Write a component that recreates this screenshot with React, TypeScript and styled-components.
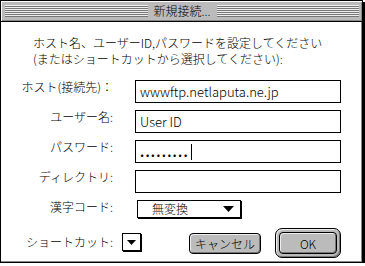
import styled, { createGlobalStyle } from 'styled-components';

const GlobalStyle = createGlobalStyle`
  body {
    margin: 0;
    background: #fff;
  }
  * {
    box-sizing: border-box;
  }
`;

const font = `"Noto Sans CJK JP", "DejaVu Sans", sans-serif`;

const DownArrow: React.FC<{ w?: number }> = ({ w = 11 }) => (
  <svg width={w} height={Math.ceil(w / 2)} viewBox={`0 0 ${w} ${Math.ceil(w / 2)}`}>
    <polygon points={`0,0 ${w},0 ${w / 2},${Math.ceil(w / 2)}`} fill="#000" />
  </svg>
);

const App: React.FC = () => {
  return (
    <>
      <GlobalStyle />
      <Window>
        <TitleBar>
          <Stripes />
          <Title>新規接続...</Title>
          <Stripes />
        </TitleBar>
        <Content>
          <Message>
            ホスト名、ユーザーID,パスワードを設定してください
            <br />
            (またはショートカットから選択してください):
          </Message>
          <Form>
            <Label>ホスト(接続先)：</Label>
            <Field>wwwftp.netlaputa.ne.jp</Field>
            <Label>ユーザー名:</Label>
            <Field>User ID</Field>
            <Label>パスワード:</Label>
            <Field>
              <Dots>.........</Dots>
              <Caret />
            </Field>
            <Label>ディレクトリ:</Label>
            <Field />
            <Label>漢字コード:</Label>
            <Popup>
              <span>無変換</span>
              <DownArrow />
            </Popup>
          </Form>
          <Footer>
            <Label>ショートカット:</Label>
            <SmallPopup>
              <DownArrow w={9} />
            </SmallPopup>
            <Buttons>
              <Button>キャンセル</Button>
              <DefaultRing>
                <Button>OK</Button>
              </DefaultRing>
            </Buttons>
          </Footer>
        </Content>
      </Window>
    </>
  );
};

const Window = styled.div`
  width: 363px;
  height: 263px;
  border: 1px solid #000;
  box-shadow: 2px 2px 0 #000;
  display: flex;
  flex-direction: column;
  font-family: ${font};
  font-size: 12px;
  font-weight: 300;
  color: #000;
`;

const TitleBar = styled.div`
  height: 21px;
  flex: none;
  display: flex;
  align-items: center;
  padding: 0 3px 1px 4px;
  background: #bbb;
  border-bottom: 1px solid #000;
  box-shadow: inset 1px 1px 0 #fff, inset -1px -1px 0 #888;
`;

const Stripes = styled.div`
  flex: 1;
  height: 12px;
  background: repeating-linear-gradient(to bottom, #eee 0 1px, #777 1px 2px);
`;

const Title = styled.div`
  padding: 0 6px;
  line-height: 20px;
  font-size: 12px;
`;

const Content = styled.div`
  flex: 1;
  display: flex;
  flex-direction: column;
  background: #fff;
  padding-top: 13px;
  box-shadow: inset -1px -1px 0 #888;
`;

const Message = styled.div`
  padding-left: 32px;
  line-height: 16px;
  white-space: nowrap;
`;

const Form = styled.div`
  display: grid;
  grid-template-columns: 112px 206px;
  column-gap: 22px;
  row-gap: 7px;
  margin-top: 13px;
  align-items: start;
`;

const Label = styled.div`
  width: 112px;
  text-align: right;
  line-height: 16px;
  margin-top: -1px;
  white-space: nowrap;
`;

const Field = styled.div`
  height: 23px;
  border: 1px solid #000;
  background: #fff;
  padding-left: 4px;
  display: flex;
  align-items: center;
  font-size: 13px;
  line-height: 21px;
  white-space: nowrap;
`;

const Dots = styled.span`
  font-weight: bold;
  letter-spacing: 1.2px;
`;

const Caret = styled.span`
  width: 1px;
  height: 16px;
  background: #000;
  margin-left: 2px;
`;

const Popup = styled.div`
  width: 104px;
  height: 18px;
  margin-left: 2px;
  border: 1px solid #000;
  box-shadow: 1px 1px 0 #000;
  background: #fff;
  display: flex;
  align-items: center;
  justify-content: space-between;
  padding: 0 6px 0 14px;
  line-height: 16px;
`;

const Footer = styled.div`
  display: flex;
  align-items: center;
  margin-top: 10px;
  height: 30px;
  padding-right: 21px;

  ${Label} {
    margin-top: -2px;
  }
`;

const SmallPopup = styled.div`
  width: 19px;
  height: 18px;
  margin-left: 9px;
  margin-top: -2px;
  border: 1px solid #000;
  box-shadow: 1px 1px 0 #000;
  background: #fff;
  display: flex;
  align-items: center;
  justify-content: center;
`;

const Buttons = styled.div`
  margin-left: auto;
  display: flex;
  align-items: center;
  gap: 14px;
`;

const Button = styled.div`
  min-width: 58px;
  height: 21px;
  padding: 0 5px;
  border: 1px solid #000;
  border-radius: 4px;
  background: #bbb;
  box-shadow: inset 1px 1px 0 #eee, inset -1px -1px 0 #777;
  display: flex;
  align-items: center;
  justify-content: center;
  line-height: 19px;
`;

const DefaultRing = styled.div`
  width: 66px;
  height: 30px;
  padding: 3px;
  border: 1px solid #000;
  border-radius: 7px;
  background: #bbb;
  box-shadow: inset 1px 1px 0 #eee, inset -1px -1px 0 #777;

  ${Button} {
    height: 22px;
    width: 58px;
  }
`;

export default App;
